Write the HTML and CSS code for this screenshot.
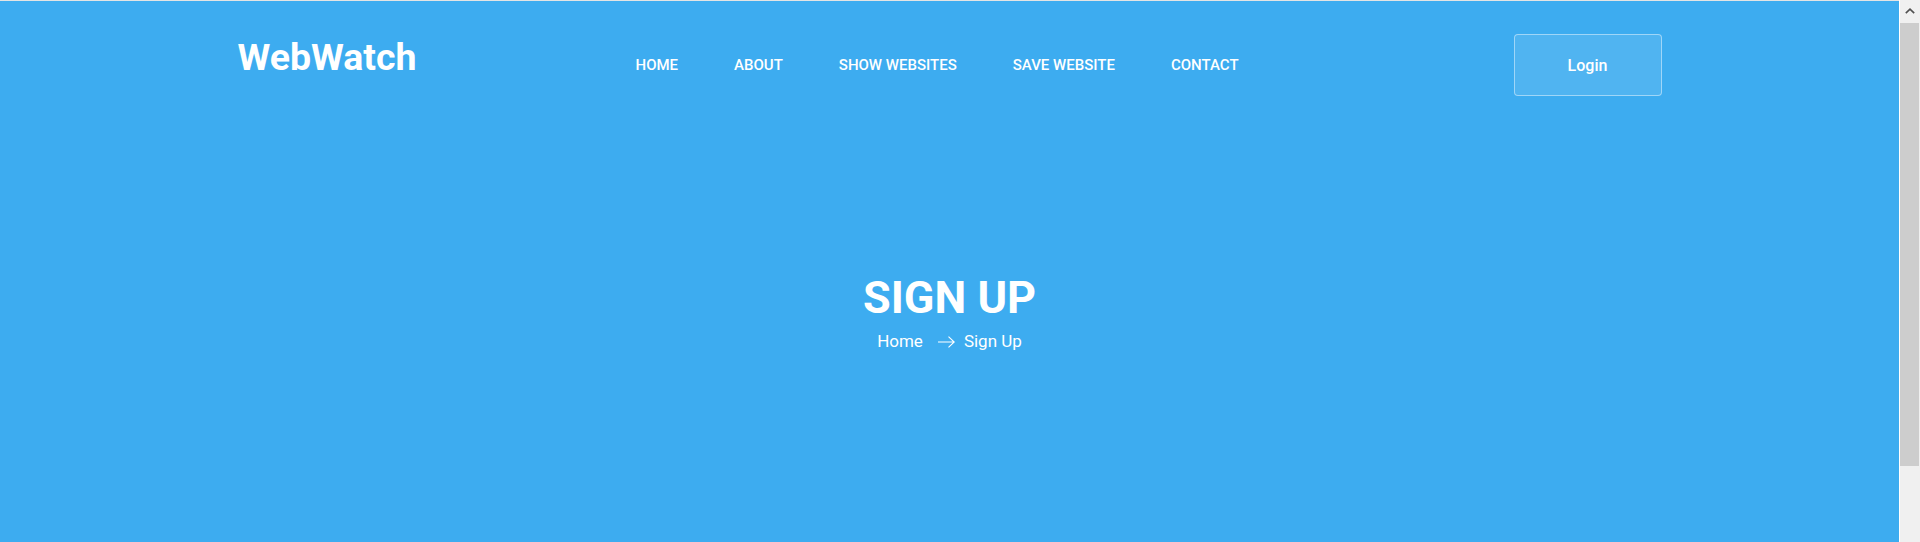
FILE: index.html
```html
<!DOCTYPE html>
<html lang="en">
<head>
<meta charset="utf-8">
<title>WebWatch - Sign Up</title>
<link rel="stylesheet" href="styles.css">
</head>
<body>
<div class="page">
  <main class="main">
    <header class="header">
      <div class="container header-row">
        <a class="logo" href="#">WebWatch</a>
        <nav class="nav">
          <a href="#">Home</a>
          <a href="#">About</a>
          <a href="#">Show Websites</a>
          <a href="#">Save Website</a>
          <a href="#">Contact</a>
        </nav>
        <div></div>
        <a class="login" href="#">Login</a>
      </div>
    </header>
    <section class="hero">
      <h1 class="hero-title">SIGN UP</h1>
      <div class="crumbs">
        <a href="#" class="crumb-home">Home</a>
        <svg class="crumb-arrow" width="17" height="12" viewBox="0 0 17 12" aria-hidden="true"><path d="M0 6H16.2M10.5 0.6L16.2 6L10.5 11.4" fill="none" stroke="#fff" stroke-width="1.1"/></svg>
        <span>Sign Up</span>
      </div>
    </section>
  </main>
  <aside class="scrollbar" aria-hidden="true">
    <div class="sb-up"><svg width="10" height="6" viewBox="0 0 10 6"><path d="M0.8 5.2L5 1.2L9.2 5.2" fill="none" stroke="#505050" stroke-width="1.6"/></svg></div>
    <div class="sb-thumb"></div>
  </aside>
</div>
</body>
</html>
```

FILE: styles.css
```css
* { box-sizing: border-box; }
html, body { margin: 0; padding: 0; height: 100%; overflow: hidden; }
body { font-family: Roboto, "Noto Sans", "Liberation Sans", sans-serif; color: #fff; background: #fff; }
a { color: inherit; text-decoration: none; }

.page { display: flex; height: 542px; }
.main {
  flex: 1;
  background: #3dacf0;
  border-top: 1px solid #e4e4e4;
}

.container { max-width: 1424px; margin: 0 auto; }
.header { padding-top: 33px; }
.header-row {
  display: grid;
  grid-template-columns: 398px auto 1fr 148px;
  align-items: center;
  height: 62px;
}
.logo {
  align-self: start;
  margin-top: 5px;
  font-size: 37.5px;
  line-height: 37px;
  font-weight: 700;
}
.nav { display: flex; gap: 56px; }
.nav a {
  font-size: 15px;
  font-weight: 500;
  text-transform: uppercase;
  line-height: 20px;
}
.login {
  display: flex;
  align-items: center;
  justify-content: center;
  height: 62px;
  border: 1px solid rgba(255, 255, 255, 0.45);
  border-radius: 4px;
  background: rgba(255, 255, 255, 0.1);
  font-size: 16px;
  font-weight: 500;
}

.hero { padding-top: 175px; text-align: center; }
.hero-title {
  margin: 0;
  font-size: 45px;
  line-height: 54px;
  font-weight: 700;
}
.crumbs {
  margin-top: 4px;
  display: flex;
  justify-content: center;
  align-items: center;
  font-size: 17px;
  line-height: 25.5px;
}
.crumb-home { margin-right: 15px; }
.crumb-arrow { margin-right: 9px; margin-top: 1px; }

.scrollbar {
  width: 21px;
  background: #f0f0f0;
  border-left: 1px solid #fff;
  display: flex;
  flex-direction: column;
}
.sb-up { height: 22px; display: flex; align-items: center; justify-content: center; padding-right: 1px; }
.sb-thumb { width: 19px; height: 443px; background: #cdcdcd; margin-top: 1px; }
```
